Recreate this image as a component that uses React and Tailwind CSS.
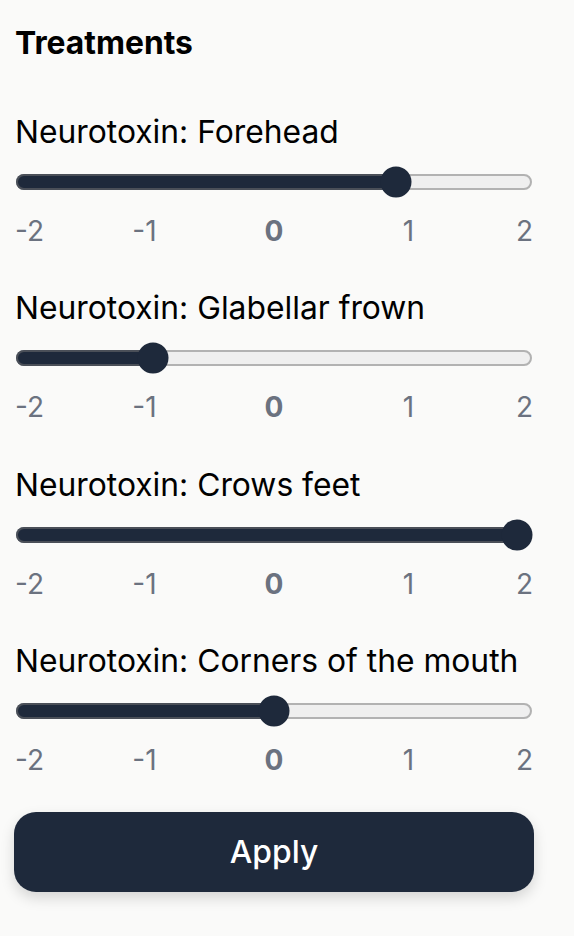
import React, { useState } from "react";

const treatments = [
  { name: "Neurotoxin: Forehead", value: 1 },
  { name: "Neurotoxin: Glabellar frown", value: -1 },
  { name: "Neurotoxin: Crows feet", value: 2 },
  { name: "Neurotoxin: Corners of the mouth", value: 0 },
];

function Ticks() {
  return (
    <div className="relative mt-[13px] h-[40px] w-[518px] text-[28px] leading-[40px] text-[#6b7280]">
      <span className="absolute left-0 top-0">-2</span>
      <span className="absolute left-[25%] top-0 -translate-x-1/2">-1</span>
      <span className="absolute left-[50%] top-0 -translate-x-1/2 font-bold">0</span>
      <span className="absolute left-[calc(75%+5px)] top-0 -translate-x-1/2">1</span>
      <span className="absolute right-0 top-0">2</span>
    </div>
  );
}

function Row({ name, initial }) {
  const [v, setV] = useState(initial);
  return (
    <div className="flex flex-col">
      <div className="text-[31.8px] leading-[48px] text-black">{name}</div>
      <div className="mt-[10px] h-[32px] w-[518px]">
        <input
          type="range"
          min={-2}
          max={2}
          step={1}
          value={v}
          onChange={(e) => setV(Number(e.target.value))}
          className="m-0 block h-[16px] w-[259px] accent-[#1e293b] [zoom:2]"
        />
      </div>
      <Ticks />
    </div>
  );
}

export default function App() {
  return (
    <div className="min-h-[936px] w-full bg-[#fafaf9] pl-[15px] pt-[19px] font-['Inter',sans-serif]">
      <h2 className="text-[31.8px] font-bold leading-[48px] text-black">Treatments</h2>
      <div className="mt-[41px] flex flex-col gap-[33.3px]">
        {treatments.map((t) => (
          <Row key={t.name} name={t.name} initial={t.value} />
        ))}
      </div>
      <button className="-ml-px mt-[32px] flex h-[80px] w-[520px] items-center justify-center rounded-[22px] bg-[#1e293b] text-[31.8px] font-medium text-white shadow-[0_6px_14px_rgba(0,0,0,0.15)]">
        Apply
      </button>
    </div>
  );
}
